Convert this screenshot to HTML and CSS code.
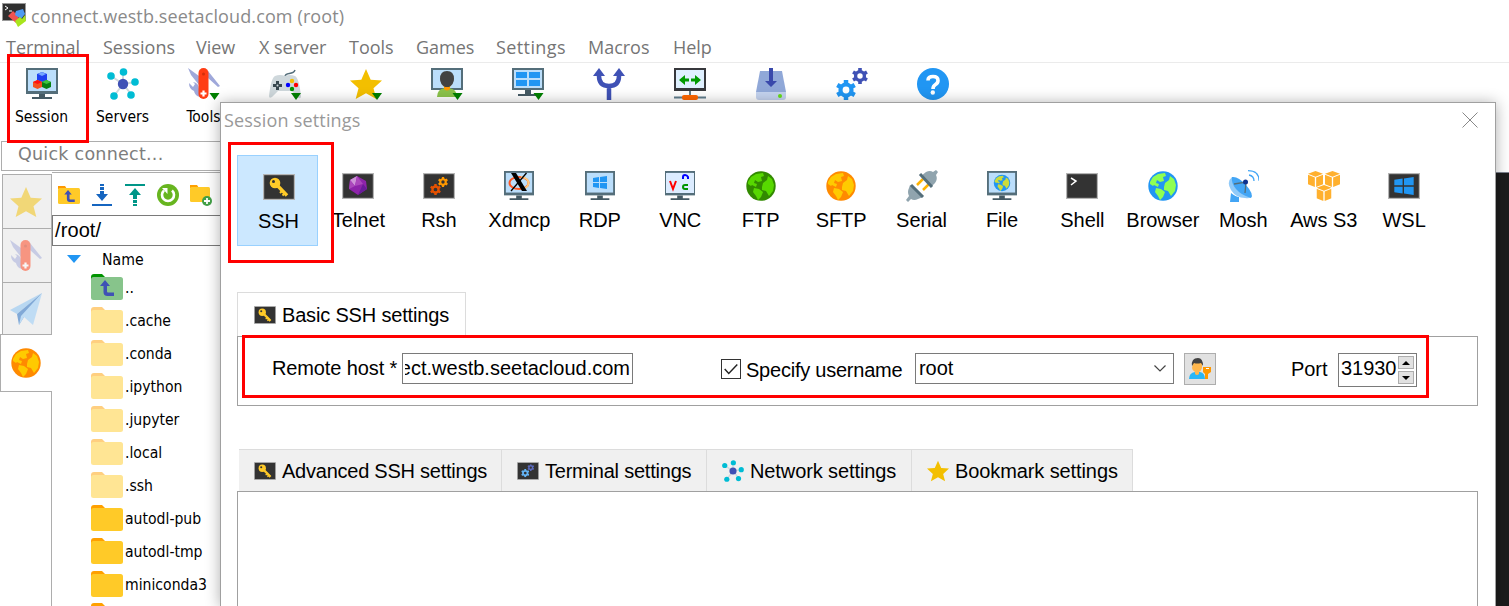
FILE: index.html
```html
<!DOCTYPE html>
<html lang="en">
<head>
<meta charset="utf-8">
<title>connect.westb.seetacloud.com (root)</title>
<link rel="stylesheet" href="styles.css">
</head>
<body>
<svg class="sprite" aria-hidden="true">
  <symbol id="monitor" viewBox="0 0 32 32"><path fill="#546e7a" d="M0 0h32v26H0z"/><path fill="#bbdefb" d="M2 2h28v21H2z"/><path fill="#455a64" d="M13 26h6v3h7v2H6v-2h7z"/></symbol>
  <symbol id="net" viewBox="0 0 32 32"><path stroke="#cfd8dc" stroke-width="2" d="M16 16V4M16 16 4 8M16 16l12-2M16 16 7 28M16 16l8 10"/><circle cx="16" cy="16" r="5.2" fill="#3f51b5"/><g fill="#00bcd4"><circle cx="16.500" cy="4" r="3.800"/><circle cx="4" cy="8" r="3.800"/><circle cx="28" cy="14" r="3.800"/><circle cx="7" cy="28" r="3.800"/><circle cx="24" cy="27" r="3.800"/></g></symbol>
  <symbol id="knife" viewBox="0 0 32 32"><path fill="#9fa8da" d="M0 0 11 8v9L3 7zM20 3l12 15-2 1-10-9zM1 15l4 4 2-3-2-2q6 1 6 7l1 8q-5-1-6-6-5-2-5-8z"/><rect x="10.500" width="10" height="31" rx="5" fill="#ff3d14"/><circle cx="15.500" cy="6" r="1.500" fill="#d32f0c"/><path stroke="#fff" stroke-width="2.200" d="M15.500 22.500v6M12.500 25.500h6"/></symbol>
  <symbol id="star" viewBox="0 0 32 32"><path fill="#f3bf00" d="m16 1 4.700 10.700L32 12.500l-8.500 7.800L26.300 31 16 25.200 5.700 31l2.800-10.700L0 12.500l11.300-.8z"/></symbol>
  <symbol id="drop" viewBox="0 0 10 7"><path fill="#008000" d="M0 0h10L5 7z"/></symbol>
  <symbol id="globe" viewBox="0 0 32 32"><circle cx="16" cy="16" r="14.700" class="sea"/><path class="land" d="M3 12 6 7l5-3 7-1 1 3-3 1 1 4-4 1-3-2-1 3 3 1-1 3-4-2-1 1-3-2zM9 18l5 1 4 3-2 5-3 3-2-4-3-4zM17 17l1-4 4-3 1-4 4 3 2 6-1 6-4 5-3-5-4-1z"/></symbol>
  <symbol id="term" viewBox="0 0 32 26"><path fill="#b5b5b5" d="M0 0h32v26H0z"/><path fill="#333" d="M1.200 1.200h29.600v23.600H1.200z"/></symbol>
  <symbol id="key" viewBox="0 0 32 26"><use href="#term"/><path stroke="#ffca28" stroke-width="3.400" d="m13 10 11 11.500"/><path stroke="#ffca28" stroke-width="2" d="m17 19 3-3M19.500 21.500l3-3"/><circle cx="12" cy="9" r="5.300" fill="#ffca28"/><circle cx="10.500" cy="7.500" r="1.500" fill="#333"/></symbol>
  <symbol id="gear" viewBox="0 0 20 20"><path fill="none" stroke="currentColor" stroke-width="4.500" d="M10 0v4M10 16v4M1.300 5l3.500 2M15.200 13l3.500 2M1.300 15l3.500-2M15.200 7l3.500-2"/><circle cx="10" cy="10" r="5.500" fill="none" stroke="currentColor" stroke-width="4.200"/></symbol>
  <symbol id="win" viewBox="0 0 14 13"><path fill="#2196f3" d="M0 2 6 1v5H0zM7 1l7-1v6H7zM0 7h6v5l-6-1zM7 7h7v6l-7-1z"/></symbol>
  <symbol id="folder" viewBox="0 0 32 26"><path class="flap" d="M0 3q0-3 3-3h8l3 3v6H0z"/><rect class="front" y="3" width="32" height="23" rx="2.500"/></symbol>
  <symbol id="cube" viewBox="0 0 16 17"><path fill="#ffb02e" d="m8 0 8 3-8 3-8-3zM0 4l7.300 3v10L0 14zM16 4 8.700 7v10L16 14z"/></symbol>
  <symbol id="uparrow" viewBox="0 0 14 16"><path fill="#3f51b5" d="M5 0 0 6h3.500v6q0 4 4 4H14v-3.500H8q-1 0-1-1V6h3z"/></symbol>
</svg>

<div class="app">
  <header class="titlebar">
    <svg class="logo" viewBox="0 0 24 24"><path fill="#999" d="M0 0h24v18H0z"/><path fill="#303030" d="M1 1h22v16H1z"/><path fill="none" stroke="#fff" d="m3 3 3 2-3 2M7 8h3"/><path fill="#ef5350" d="m6 13 5-5 2 2 2-2 3 3-2 3 2 2-4 4z"/><path fill="#4e9af1" d="m14 8 7-2 2 5-4 5-6-4z"/><path fill="#a8e51d" d="m13 18 5-4 2 2 3-4 1 6-8 6z"/></svg>
    <span>connect.westb.seetacloud.com (root)</span>
  </header>
  <nav class="menubar"><span>Terminal</span><span>Sessions</span><span>View</span><span>X server</span><span>Tools</span><span>Games</span><span>Settings</span><span>Macros</span><span>Help</span></nav>

  <div class="toolbar">
    <div class="tool"><svg viewBox="0 0 32 32"><use href="#monitor"/><path fill="#1e40f0" d="m16 4 5 2v6l-5 2-5-2V6z"/><path fill="#75a7ff" d="m16 4 4 2-4 2-4-2z"/><path fill="#f4511e" d="m11.500 12 4.500 2v5l-4.500 2L7 19v-5z"/><path fill="#ff1010" d="m11.500 12 4.500 2-4.500 2L7 14z"/><path fill="#087f12" d="m20.500 12 4.500 2v5l-4.500 2-4.500-2v-5z"/><path fill="#3ec43e" d="m20.500 12 4.500 2-4.500 2-4.500-2z"/></svg><span>Session</span></div>
    <div class="tool"><svg><use href="#net"/></svg><span>Servers</span></div>
    <div class="tool"><svg viewBox="0 0 32 32"><use href="#knife"/><use href="#drop" x="21" y="25" width="11" height="7"/></svg><span>Tools</span></div>
    <div class="tool"><svg viewBox="0 0 32 32"><path fill="none" stroke="#546e7a" stroke-width="1.500" d="M16 9c0-6 8-1 10-7"/><path fill="#cfd8dc" d="M6 8q5-2 10 0 5-2 10 0 4 2 6 20 0 4-4 1l-5-6H9l-6 6q-3 2-3-1Q2 10 6 8z"/><path stroke="#37474f" stroke-width="3" d="M8.500 13v9M4 17.500h9"/><circle cx="8.500" cy="17.500" r="1" fill="#cfd8dc"/><circle cx="23" cy="13" r="2.200" fill="#f3bf00"/><circle cx="19" cy="17" r="2.200" fill="#00f"/><circle cx="27" cy="17" r="2.200" fill="red"/><circle cx="23" cy="21" r="2.200" fill="#009400"/><use href="#drop" x="22" y="25" width="10" height="7"/></svg></div>
    <div class="tool"><svg viewBox="0 0 32 32"><use href="#star"/><use href="#drop" x="22" y="25" width="10" height="7"/></svg></div>
    <div class="tool"><svg viewBox="0 0 32 32"><path fill="#546e7a" d="M0 0h32v22H0z"/><path fill="#bbdefb" d="M2 2h28v18H2z"/><path fill="#8bc34a" d="M6 29q0-8 8-9h4q8 1 8 9z"/><path fill="#ff9800" d="M10 9h12v5l-3 5v2q-3 3-6 0v-2l-3-5z"/><path fill="#424242" d="M9 11q0-8 7-8t7 8q0 5-5 8h-4q-5-3-5-8z"/><use href="#drop" x="21" y="25" width="11" height="7"/></svg></div>
    <div class="tool"><svg viewBox="0 0 32 32"><path fill="#546e7a" d="M0 0h32v22H0z"/><path fill="#bbdefb" d="M2 2h28v18H2z"/><path fill="#2196f3" d="M4 4h11v6H4zM17 4h11v6H17zM4 12h11v6H4zM17 12h11v6H17z"/><path fill="#455a64" d="M13 22h6v4h7v2H6v-2h7z"/><use href="#drop" x="21" y="25" width="11" height="7"/></svg></div>
    <div class="tool"><svg viewBox="0 0 32 32"><path fill="none" stroke="#3f51b5" stroke-width="4.500" d="M6 6v2q0 10 10 10t10-10V6M16 18v14"/><path fill="#3f51b5" d="m6 0 6 8H0zM26 0l6 8H20z"/></svg></div>
    <div class="tool"><svg viewBox="0 0 32 32"><path fill="#37383c" d="M0 0h32v23H0z"/><path fill="#dff0ff" d="M2 2h28v18H2z"/><path fill="#009a00" d="m5 12 6-5v3.500h4v3h-4V17zM27 12l-6-5v3.500h-4v3h4V17z"/><path stroke="#607d8b" stroke-width="2" d="M16 23v4M0 29.500h32"/><rect x="8" y="27" width="16" height="5" rx="2" fill="#ff6600"/></svg></div>
    <div class="tool"><svg viewBox="0 0 32 32"><path fill="#90a8d8" d="M5 3h22l4 21H1z"/><path fill="#c5d4f0" d="M1 24h30v5q0 3-3 3H4q-3 0-3-3z"/><path fill="#3949ab" d="M14 0h4v13h4l-6 6-6-6h4z"/><circle cx="25" cy="28" r="2" fill="#64dd17"/></svg></div>
    <div class="tool"><svg viewBox="0 0 32 32"><use href="#gear" y="12" width="20" height="20" color="#2196f3"/><use href="#gear" x="16" width="16" height="16" color="#3f51b5"/></svg></div>
    <div class="tool"><svg viewBox="0 0 32 32"><circle cx="16" cy="16" r="16" fill="#2196f3"/><path fill="none" stroke="#fff" stroke-width="3.600" d="M11 12.500q0-4 5-4t5 4q0 2.500-2.500 4T16 21"/><circle cx="15.800" cy="24.500" r="2.200" fill="#fff"/></svg></div>
  </div>

  <div class="quick">Quick connect...</div>

  <main class="workspace">
    <aside class="rail">
      <div class="railtab first"><svg><use href="#star"/></svg></div>
      <div class="railtab"><svg><use href="#knife"/></svg></div>
      <div class="railtab last"><svg viewBox="0 0 32 32"><path fill="#82bff2" d="M32 0 0 17l7 4z"/><path fill="#1565c0" d="m7 21 2 11 5-8L32 0z"/><path fill="#90caf9" d="m32 0-9 32-9-8-5 8 2-9z"/></svg></div>
      <div class="railtab active"><svg class="orange"><use href="#globe"/></svg></div>
      <div class="railrest"></div>
    </aside>
    <section class="browser">
      <div class="filebar">
        <svg viewBox="0 0 22 22"><path fill="#ff9800" d="M0 2h7l2 3H0z"/><rect y="4" width="22" height="16" rx="1.500" fill="#ffca28"/><use href="#uparrow" x="6" y="6" width="11" height="12"/></svg>
        <svg viewBox="-1 0 22 22"><path fill="#1565c0" d="M8 0h4v2H8zM8 3h4v3H8zM8 7h4v3h4l-6 7-6-7h4zM0 20h20v2H0z"/></svg>
        <svg viewBox="0 0 22 22"><path fill="#009688" d="M1 0h20v2H1zM11 4l6 7h-4v4H9v-4H5zM9 16h4v3H9zM9 20h4v2H9z"/></svg>
        <svg viewBox="0 0 22 22"><circle cx="11" cy="11" r="11" fill="#67b51f"/><path fill="none" stroke="#fff" stroke-width="2.600" d="M15 6.500a6 6 0 1 1-8 0"/><path fill="#fff" d="M5 4h5.500v6z"/></svg>
        <svg viewBox="0 0 22 22"><path fill="#ffa000" d="M0 1h7l2 3H0z"/><rect y="3" width="20" height="15" rx="1.500" fill="#ffca28"/><circle cx="17" cy="17" r="5" fill="#43a047"/><path stroke="#fff" stroke-width="1.800" d="M17 14v6M14 17h6"/></svg>
      </div>
      <div class="path">/root/</div>
      <div class="colhead"><i class="sort"></i><span>Name</span></div>
      <div class="files">
        <div class="up"><svg viewBox="0 0 32 26"><path fill="#009400" d="M0 3q0-3 3-3h8l3 3v6H0z"/><rect y="3" width="32" height="23" rx="2.500" fill="#87c48b"/><use href="#uparrow" x="8.500" y="6" width="15" height="16"/></svg><span>..</span></div>
        <div class="soft"><svg><use href="#folder"/></svg><span>.cache</span></div>
        <div class="soft"><svg><use href="#folder"/></svg><span>.conda</span></div>
        <div class="soft"><svg><use href="#folder"/></svg><span>.ipython</span></div>
        <div class="soft"><svg><use href="#folder"/></svg><span>.jupyter</span></div>
        <div class="soft"><svg><use href="#folder"/></svg><span>.local</span></div>
        <div class="soft"><svg><use href="#folder"/></svg><span>.ssh</span></div>
        <div><svg><use href="#folder"/></svg><span>autodl-pub</span></div>
        <div><svg><use href="#folder"/></svg><span>autodl-tmp</span></div>
        <div><svg><use href="#folder"/></svg><span>miniconda3</span></div>
        <div class="partial"><svg><use href="#folder"/></svg></div>
      </div>
    </section>
    <section class="console"></section>
  </main>
</div>

<div class="dialoglayer">
<div class="dialog">
  <div class="dialoghead"><span>Session settings</span><svg viewBox="0 0 16 16"><path stroke="#888" d="m.5.5 15 15M15.500.5l-15 15"/></svg></div>
  <div class="types">
    <div class="type selected"><svg viewBox="0 0 32 32"><use href="#key" y="3" width="32" height="26"/></svg><span>SSH</span></div>
    <div class="type"><svg viewBox="0 0 32 32"><use href="#term" y="3" width="32" height="26"/><path fill="#8e24aa" d="m15 6 9 5 1 8-9 6-9-6 1-9z"/><path fill="#ce93d8" d="m15 6-7 4 5 6z"/><path fill="#ab47bc" d="m15 6 6 8-8 2zM8 10l5 6-6 3z"/><path fill="#6a1b9a" d="m21 14 4 5-9 6z"/></svg><span>Telnet</span></div>
    <div class="type"><svg viewBox="0 0 32 32"><use href="#term" y="3" width="32" height="26"/><use href="#gear" x="7" y="14" width="11" height="11" color="#e65100"/><use href="#gear" x="15" y="7" width="10" height="10" color="#ff9800"/></svg><span>Rsh</span></div>
    <div class="type"><svg viewBox="0 0 32 32"><use href="#monitor" y="1" width="32" height="30"/><ellipse cx="16" cy="13" rx="9.500" ry="6" fill="none" stroke="#ff5722" stroke-width="2"/><path fill="none" stroke="#ffcc80" stroke-width="2" d="M18 7c10 1 10 11 0 12"/><path fill="#000" d="M8 3h5l11 18h-5z"/><path stroke="#000" stroke-width="1.300" d="M23.500 3 8 21"/></svg><span>Xdmcp</span></div>
    <div class="type"><svg viewBox="0 0 32 32"><use href="#monitor" y="1" width="32" height="30"/><use href="#win" x="9" y="6" width="14" height="13"/></svg><span>RDP</span></div>
    <div class="type"><svg viewBox="0 0 32 32"><use href="#monitor" y="1" width="32" height="30"/><path fill="#dcecff" d="M2 3h28v20H2z"/><path fill="none" stroke="#f00" stroke-width="2" d="m6 11 3 8 3-8"/><path fill="none" stroke="#00f" stroke-width="2" d="M19 9V7q0-2 2-2t3 2v2"/><path fill="none" stroke="#009400" stroke-width="2" d="M24 15h-3q-2 0-2 2t2 2h3"/></svg><span>VNC</span></div>
    <div class="type"><svg class="green"><use href="#globe"/></svg><span>FTP</span></div>
    <div class="type"><svg class="orange"><use href="#globe"/></svg><span>SFTP</span></div>
    <div class="type"><svg viewBox="0 0 32 32"><path stroke="#ffb300" stroke-width="2.500" d="m11 15 6-6M17 20l6-6"/><path fill="#90a4ae" d="m15 6 5-4q4-2 7 0l3-2 2 2-2 3q2 4-1 8l-4 4zM4 15l13 12-5 2q-4 2-7 0l-3 3-2-2 3-4q-2-4 0-8z"/><path stroke="#546e7a" stroke-width="3" d="m14 4 12 13M5 15l12 12"/></svg><span>Serial</span></div>
    <div class="type"><svg class="file" viewBox="0 0 32 32"><use href="#monitor" y="1" width="32" height="30"/><use href="#globe" x="7" y="4" width="18" height="18"/></svg><span>File</span></div>
    <div class="type"><svg viewBox="0 0 32 32"><use href="#term" y="3" width="32" height="26"/><path fill="none" stroke="#fff" stroke-width="1.500" d="m5 8 5 3-5 4"/></svg><span>Shell</span></div>
    <div class="type"><svg class="blue"><use href="#globe"/></svg><span>Browser</span></div>
    <div class="type"><svg viewBox="0 0 32 32"><path fill="#42a5f5" d="M4 23q5 4 8 4v5H3z"/><path fill="#90caf9" d="M5 7Q-1 12 4 20t14 8q6 1 7-2z"/><path fill="#42a5f5" d="M5 7q6-1 14 8t5 13Q14 25 9 19T5 7z"/><path fill="none" stroke="#546e7a" stroke-width="1.300" d="M7 14 19 12l-1 11"/><circle cx="18.500" cy="12" r="2.500" fill="#0d328f"/><path fill="none" stroke="#42a5f5" stroke-width="1.300" d="M22 5q5 1 5 6M21 .7q11 0 11 10"/></svg><span>Mosh</span></div>
    <div class="type"><svg viewBox="0 0 32 32"><use href="#cube" y="1" width="15" height="16"/><use href="#cube" x="17" y="1" width="15" height="16"/><use href="#cube" x="8.500" y="15" width="15" height="16"/></svg><span>Aws S3</span></div>
    <div class="type"><svg viewBox="0 0 32 32"><use href="#term" y="3" width="32" height="26"/><use href="#win" x="6" y="7" width="20" height="18"/></svg><span>WSL</span></div>
  </div>

  <div class="basictab"><svg class="mini"><use href="#key"/></svg><span>Basic SSH settings</span></div>
  <div class="basic">
    <label class="hostlabel">Remote host *</label>
    <div class="field host"><span>connect.westb.seetacloud.com</span></div>
    <div class="check"><svg viewBox="0 0 20 20"><path fill="none" stroke="#222" stroke-width="1.600" d="m3 10 4.500 5L17 5"/></svg></div>
    <label class="userlabel">Specify username</label>
    <div class="field user"><span>root</span><svg viewBox="0 0 12 7"><path fill="none" stroke="#444" stroke-width="1.200" d="m.5.500 5.500 5.500 5.500-5.500"/></svg></div>
    <div class="userkey"><svg viewBox="0 0 22 22"><path fill="#29b6f6" d="M0 21q0-6 6-7h5q5 1 5 7z"/><path fill="#ffb74d" d="M4 5h9v5q-1 3-3 4v2q-2 2-4 0v-2q-3-2-3-4z"/><path fill="#424242" d="M3 8q-1-8 6-8 5 0 5 8l-2-3q-4 1-7 0z"/><path fill="#ff9800" d="M14 9h8v5l-3 2v5h-3v-5l-2-2z"/><path fill="#fff" d="M17 10h3v1h-3z"/></svg></div>
    <label class="portlabel">Port</label>
    <div class="field port"><span>31930</span><div class="spin"><b class="inc"></b><b class="dec"></b></div></div>
  </div>

  <div class="tabs">
    <div class="tab t1"><svg class="mini"><use href="#key"/></svg><span>Advanced SSH settings</span></div>
    <div class="tab t2"><svg class="mini" viewBox="0 0 32 26"><use href="#term"/><use href="#gear" x="6" y="10" width="12" height="12" color="#64b5f6"/><use href="#gear" x="15" y="3" width="10" height="10" color="#5c6bc0"/></svg><span>Terminal settings</span></div>
    <div class="tab t3"><svg class="square"><use href="#net"/></svg><span>Network settings</span></div>
    <div class="tab t4"><svg class="square"><use href="#star"/></svg><span>Bookmark settings</span></div>
  </div>
  <div class="tabpanel"></div>
</div>
</div>

<div class="mark mark-session"></div>
<div class="mark mark-ssh"></div>
<div class="mark mark-fields"></div>
</body>
</html>
```
FILE: styles.css
```css
* { box-sizing: border-box; }
html, body { margin: 0; height: 606px; overflow: hidden; background: #fff; }
body { position: relative; width: 1509px; font-family: "Liberation Sans", Arial, sans-serif; color: #000; white-space: nowrap; }
svg { display: block; flex: none; }
.sprite { position: absolute; width: 0; height: 0; }

.app { display: flex; flex-direction: column; height: 606px; overflow: hidden; }
.titlebar { display: flex; align-items: center; height: 32px; padding-left: 2px; gap: 5px; font: 18px "Open Sans", sans-serif; letter-spacing: .12px; color: #8a8a8a; }
.logo { width: 24px; height: 24px; margin-top: -2px; }
.menubar { display: grid; grid-template-columns: 97px 93px 63px 90px 67px 80px 92px 85px 60px; height: 31px; padding-left: 6px; line-height: 31px; font-family: "Open Sans", sans-serif; font-size: 18px; letter-spacing: -.02px; color: #757575; border-bottom: 1px solid #ebebeb; }
.menubar span:nth-child(7) { letter-spacing: .4px; }
.toolbar { display: flex; height: 78px; padding: 5px 0 0 1px; }
.tool { display: flex; flex-direction: column; align-items: center; width: 81px; font: 15.500px "DejaVu Sans Condensed", "DejaVu Sans", sans-serif; }
.tool svg { width: 32px; height: 32px; }
.tool span { margin-top: 8px; }
.quick { width: 1300px; height: 30px; margin-left: 1px; padding-left: 16px; line-height: 25px; border: 1px solid #adadad; font-family: "DejaVu Sans", sans-serif; font-size: 17.500px; letter-spacing: .25px; color: #7d7d7d; }

.workspace { display: flex; flex: 1; min-height: 0; margin-top: 1px; }
.rail { display: flex; flex-direction: column; width: 52px; padding-top: 2px; }
.railtab { display: flex; align-items: center; justify-content: center; height: 54px; margin-left: 2px; padding-right: 2px; background: #f0f0f0; border: solid #adadad; border-width: 1px 1px 0; }
.railtab svg { width: 32px; height: 32px; opacity: .5; }
.railtab.last { height: 52px; }
.railtab.active { height: 58px; margin-left: 0; background: #fff; border-width: 1px 0 1px 1px; }
.railtab.active svg { opacity: 1; }
.railrest { flex: 1; border-right: 1px solid #adadad; margin-top: -1px; }
.browser { width: 170px; overflow: hidden; border-top: 1px solid #adadad; }
.filebar { display: flex; align-items: center; gap: 11px; height: 42px; padding: 2px 0 0 6px; }
.filebar svg { width: 22px; height: 22px; }
.path { height: 31px; padding-left: 2px; line-height: 28px; border: 1px solid #7a7a7a; font-size: 20px; letter-spacing: .1px; }
.colhead { display: flex; align-items: center; height: 26px; padding-left: 15px; gap: 21px; font: 15.700px "DejaVu Sans Condensed", "DejaVu Sans", sans-serif; }
.sort { width: 0; height: 0; border: solid transparent; border-width: 8px 7px 0; border-top-color: #2196f3; }
.files { padding-left: 39px; margin-top: -2px; font: 15.600px "DejaVu Sans Condensed", "DejaVu Sans", sans-serif; }
.files > div { display: flex; align-items: center; height: 33px; gap: 2px; }
.files .partial { height: 6px; overflow: hidden; align-items: flex-start; padding-top: 3px; }
.files svg { width: 32px; height: 26px; }
.files span { padding-top: 2px; }
.soft { --flap: #ffcf80; --front: #ffe594; }
.flap { fill: var(--flap, #ffa000); }
.front { fill: var(--front, #ffca28); }
.console { flex: 1; background: #1c1c1c; border-top: 1px solid #7f8591; }

.sea { fill: var(--sea); }
.land { fill: var(--land); }
.orange { --sea: #ff8a00; --land: #ffca00; }
.green { --sea: #328a00; --land: #57d800; }
.blue { --sea: #2196f3; --land: #8fff52; }
.file { --sea: #2196f3; --land: #cddc39; }

.dialoglayer { position: absolute; left: 200px; top: 80px; width: 1309px; height: 526px; padding: 22px 0 0 20px; overflow: hidden; }
.dialog { display: flex; flex-direction: column; width: 1276px; height: 504px; background: #fff; border: 1px solid #a0a0a0; border-bottom: 0; box-shadow: 0 1px 14px rgba(0,0,0,.32); font-size: 20px; letter-spacing: -.05px; }
.dialoghead { display: flex; justify-content: space-between; height: 52px; padding: 2px 17px 0 3px; font: 18px/30px "Open Sans", sans-serif; letter-spacing: .18px; color: #999; }
.dialoghead svg { width: 16px; height: 16px; margin-top: 7px; }
.types { display: flex; height: 137px; padding-left: 16px; }
.type { display: flex; flex-direction: column; align-items: center; width: 80.450px; height: 91px; padding-top: 15px; padding-left: .500px; }
.type svg { width: 32px; height: 32px; }
.type span { margin-top: 6px; line-height: 24px; }
.type.selected { width: 81px; background: #cce8ff; border: 1px solid #99d1ff; padding-left: 2px; }

.basictab { display: flex; align-items: center; gap: 6px; width: 229px; height: 44px; margin-left: 16px; padding-left: 16px; border: 1px solid #dcdcdc; border-bottom: 0; letter-spacing: -.17px; }
.basictab span, .tab span { padding-top: 2px; }
.mini { width: 22px; height: 18px; }
.square { width: 22px; height: 22px; }
.basic { display: flex; align-items: flex-start; height: 70px; margin: 0 17px 0 16px; padding: 16px 0 0 34px; border: 1px solid #a0a0a0; line-height: 30px; }
.hostlabel { width: 130px; letter-spacing: -.12px; }
.field { display: flex; border: 1px solid #7a7a7a; height: 31px; line-height: 29px; background: #fff; }
.host { width: 231px; padding: 0 2px; }
.host span { display: flex; justify-content: flex-end; width: 225px; overflow: hidden; letter-spacing: 0; }
.check { width: 20px; height: 20px; margin: 6px 0 0 88px; border: 1px solid #333; }
.check svg { width: 18px; height: 18px; }
.userlabel { width: 169px; margin: 2px 0 0 5px; letter-spacing: -.23px; }
.user { width: 259px; padding: 0 7px 0 3px; align-items: center; justify-content: space-between; }
.user svg { width: 12px; height: 7px; }
.userkey { width: 32px; height: 32px; margin-left: 10px; padding: 4px; background: #e1e1e1; border: 1px solid #adadad; }
.userkey svg { width: 22px; height: 22px; }
.portlabel { width: 47px; margin: 1px 0 0 75px; }
.port { width: 79px; height: 34px; padding: 0 2px; justify-content: space-between; }
.spin { display: grid; gap: 2px; width: 16px; padding-top: 2px; align-content: start; }
.spin b { display: flex; align-items: center; justify-content: center; height: 13px; background: #e1e1e1; border: 1px solid #adadad; }
.spin b::after { content: ""; border: solid transparent; border-width: 0 4px 4px; border-bottom-color: #000; }
.spin .dec::after { border-width: 4px 4px 0; border-top-color: #000; }

.tabs { display: flex; width: 894px; height: 42px; margin: 43px 0 0 18px; background: #f0f0f0; border-top: 1px solid #dcdcdc; }
.tab { display: flex; align-items: center; gap: 6px; height: 41px; padding-left: 15px; border-right: 1px solid #dcdcdc; }
.t1 { width: 263px; letter-spacing: -.24px; }
.t2 { width: 205px; letter-spacing: -.22px; }
.t3 { width: 205px; letter-spacing: -.1px; }
.t4 { width: 221px; letter-spacing: -.1px; }
.tabpanel { flex: 1; margin: 0 17px 0 16px; border: 1px solid #a0a0a0; border-bottom: 0; }

.mark { position: absolute; border: 3px solid #f00; }
.mark-session { left: 7px; top: 54px; width: 82px; height: 89px; }
.mark-ssh { left: 228px; top: 142px; width: 106px; height: 121px; }
.mark-fields { left: 242px; top: 335px; width: 1187px; height: 63px; }
```
